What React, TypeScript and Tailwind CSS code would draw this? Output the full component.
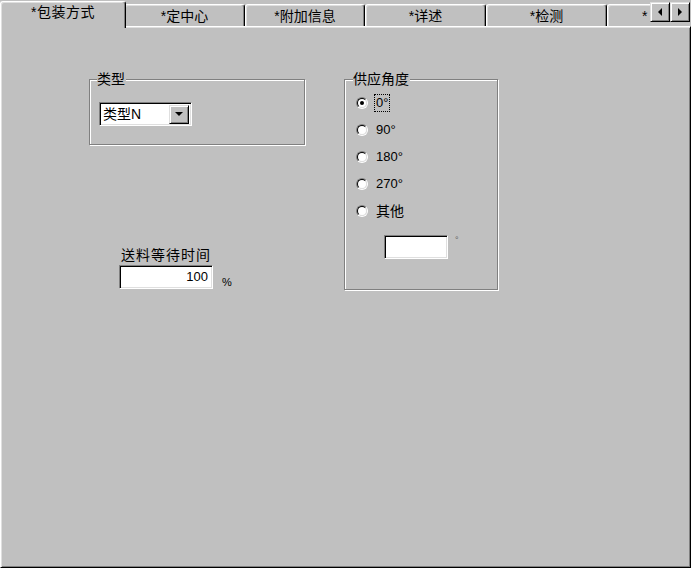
import React from "react";

const tabs = [
  { label: "*定中心", w: "w-[121px]" },
  { label: "*附加信息", w: "w-[120px]" },
  { label: "*详述", w: "w-[121px]" },
  { label: "*检测", w: "w-[121px]" },
];

const angles = ["0°", "90°", "180°", "270°", "其他"];

const Radio = ({ checked }: { checked?: boolean }) => (
  <div className="w-[12px] h-[12px] rounded-full border border-t-[#808080] border-l-[#808080] border-r-white border-b-white shrink-0">
    <div className="w-[10px] h-[10px] rounded-full border border-t-black border-l-black border-r-[#dfdfdf] border-b-[#dfdfdf] bg-white flex items-center justify-center">
      {checked && <div className="w-[4px] h-[4px] rounded-full bg-black" />}
    </div>
  </div>
);

const sunken =
  "bg-white border border-t-[#808080] border-l-[#808080] border-r-white border-b-white shadow-[inset_1px_1px_#000,inset_-1px_-1px_#dfdfdf]";
const raised =
  "bg-[#c0c0c0] border border-t-[#dfdfdf] border-l-[#dfdfdf] border-r-black border-b-black shadow-[inset_1px_1px_#fff,inset_-1px_-1px_#808080]";
const etched = "border border-[#808080] shadow-[inset_1px_1px_#fff,1px_1px_#fff]";

const App = () => {
  return (
    <div
      className="relative w-[691px] h-[568px] overflow-hidden bg-[#c0c0c0] flex flex-col text-black text-[14px]"
      style={{ fontFamily: '"Liberation Sans", "Noto Sans CJK SC", sans-serif' }}
    >
      {/* TABS */}
      <div className="flex items-end h-[26px] shrink-0">
        <div className="relative z-10 shrink-0 -mr-[2px] -mb-[2px] w-[126px] h-[27px] bg-[#c0c0c0] border-l border-t border-white border-r border-r-black rounded-tl-[3px] rounded-tr-[3px] shadow-[inset_-1px_0_#808080,inset_1px_1px_#dfdfdf] flex justify-center pt-[1px] leading-[18px] tracking-[0.5px]">
          *包装方式
        </div>
        {tabs.map((t) => (
          <div
            key={t.label}
            className={`${t.w} h-[22px] shrink-0 border-l border-t border-white border-r border-r-black rounded-tl-[3px] rounded-tr-[3px] shadow-[inset_-1px_0_#808080,inset_1px_1px_#dfdfdf] flex justify-center pt-[2px] leading-[18px]`}
          >
            {t.label}
          </div>
        ))}
        <div className="w-[43px] h-[22px] shrink-0 border-l border-t border-white rounded-tl-[3px] shadow-[inset_1px_1px_#dfdfdf] pl-[34px] pt-[2px] leading-[18px]">
          *
        </div>
      </div>
      {/* scroll arrows */}
      <div className="absolute left-[650px] top-[2px] flex z-20">
        <div className={`${raised} w-[20px] h-[20px] flex items-center justify-center`}>
          <div className="w-0 h-0 border-y-[4px] border-y-transparent border-r-[4px] border-r-black" />
        </div>
        <div className={`${raised} w-[20px] h-[20px] flex items-center justify-center`}>
          <div className="w-0 h-0 border-y-[4px] border-y-transparent border-l-[4px] border-l-black" />
        </div>
      </div>

      {/* PANEL */}
      <div className="flex-1 flex gap-[39px] pl-[88px] pt-[52px] border border-t-white border-l-white border-r-black border-b-black shadow-[inset_1px_1px_#dfdfdf,inset_-1px_-1px_#808080]">
        <div className="flex flex-col w-[216px]">
          <div className={`relative h-[66px] w-[216px] ${etched}`}>
            <span className="absolute left-[7px] -top-[10px] bg-[#c0c0c0] pr-[1px] leading-[18px]">类型</span>
            <div className={`${sunken} mt-[22px] ml-[9px] w-[93px] h-[24px] flex items-center justify-between pl-[3px] pr-[2px]`}>
              <span className="leading-[18px]">类型N</span>
              <div className={`${raised} w-[20px] h-[19px] flex items-center justify-center`}>
                <div className="w-0 h-0 border-x-[4px] border-x-transparent border-t-[4px] border-t-black" />
              </div>
            </div>
          </div>
          <div className="mt-[100px] ml-[30px] flex flex-col">
            <span className="ml-[2px] leading-[20px] tracking-[1px]">送料等待时间</span>
            <div className="flex items-end">
              <div className={`${sunken} w-[94px] h-[24px] flex items-center justify-end pr-[4px] text-[13px]`}>100</div>
              <span className="ml-[9px] text-[11px] leading-[12px] mb-[1px]">%</span>
            </div>
          </div>
        </div>

        <div className={`relative h-[211px] w-[154px] ${etched}`}>
          <span className="absolute left-[8px] -top-[10px] bg-[#c0c0c0] pr-[1px] leading-[18px]">供应角度</span>
          <div className="mt-[9px] ml-[11px] flex flex-col">
            {angles.map((a, i) => (
              <div key={a} className="h-[27px] flex items-center">
                <Radio checked={i === 0} />
                <span
                  className={`ml-[6px] px-[1px] leading-[16px] text-[13px] border border-dotted ${
                    i === 0 ? "border-black" : "border-transparent"
                  } ${a === "其他" ? "text-[14px]" : ""}`}
                >
                  {a}
                </span>
              </div>
            ))}
            <div className="flex mt-[11px] ml-[28px]">
              <div className={`${sunken} w-[64px] h-[24px]`} />
              <span className="ml-[7px] text-[9px] leading-[10px] text-[#606060]">°</span>
            </div>
          </div>
        </div>
      </div>
    </div>
  );
};

export default App;
